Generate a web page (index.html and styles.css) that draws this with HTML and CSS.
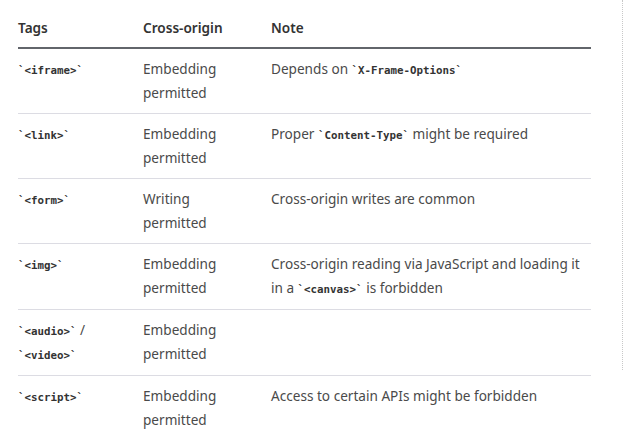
FILE: index.html
```html
<!DOCTYPE html>
<html lang="en">
<head>
<meta charset="utf-8">
<link rel="stylesheet" href="styles.css">
</head>
<body>
<div class="page">
  <main class="content">
    <table class="tbl">
      <colgroup><col class="c1"><col class="c2"><col class="c3"></colgroup>
      <thead>
        <tr><th>Tags</th><th>Cross-origin</th><th>Note</th></tr>
      </thead>
      <tbody>
        <tr><td><code>`&lt;iframe&gt;`</code></td><td>Embedding permitted</td><td>Depends on <code>`X-Frame-Options`</code></td></tr>
        <tr><td><code>`&lt;link&gt;`</code></td><td>Embedding permitted</td><td>Proper <code>`Content-Type`</code> might be required</td></tr>
        <tr><td><code>`&lt;form&gt;`</code></td><td>Writing permitted</td><td>Cross-origin writes are common</td></tr>
        <tr><td><code>`&lt;img&gt;`</code></td><td>Embedding permitted</td><td>Cross-origin reading via JavaScript and loading it in a <code>`&lt;canvas&gt;`</code> is forbidden</td></tr>
        <tr><td><code>`&lt;audio&gt;`</code> / <code>`&lt;video&gt;`</code></td><td>Embedding permitted</td><td></td></tr>
        <tr><td><code>`&lt;script&gt;`</code></td><td>Embedding permitted</td><td>Access to certain APIs might be forbidden</td></tr>
      </tbody>
    </table>
  </main>
  <aside class="side"></aside>
</div>
</body>
</html>
```
FILE: styles.css
```css
html, body {
  margin: 0;
  padding: 0;
  background: #fff;
}
body {
  font-family: "Noto Sans", "Noto Sans CJK KR", sans-serif;
  font-size: 13.6px;
  color: #4a4a4a;
  overflow: hidden;
}
.page {
  display: flex;
  align-items: flex-start;
}
.content {
  padding-left: 18px;
  width: 573px;
  flex: none;
}
.side {
  margin-left: 31px;
  width: 0;
  height: 370px;
  border-left: 1px dotted #c8c8c8;
}
.tbl {
  border-collapse: collapse;
  width: 573px;
  table-layout: fixed;
}
.c1 { width: 125px; }
.c2 { width: 128px; }
.c3 { width: 320px; }
th {
  text-align: left;
  font-weight: 600;
  color: #333;
  line-height: 24px;
  padding: 16px 0 7px 0;
  border-bottom: 2px solid #62656b;
}
td {
  vertical-align: top;
  line-height: 24px;
  padding: 8px 8px 8px 0;
  border-bottom: 1px solid #dcdce3;
}
td:nth-child(2) {
  padding-right: 20px;
}
tbody tr:last-child td {
  border-bottom: none;
}
code {
  font-family: "DejaVu Sans Mono", monospace;
  font-size: 10.8px;
  line-height: 1.9;
  font-weight: 700;
  color: #333;
}
```
